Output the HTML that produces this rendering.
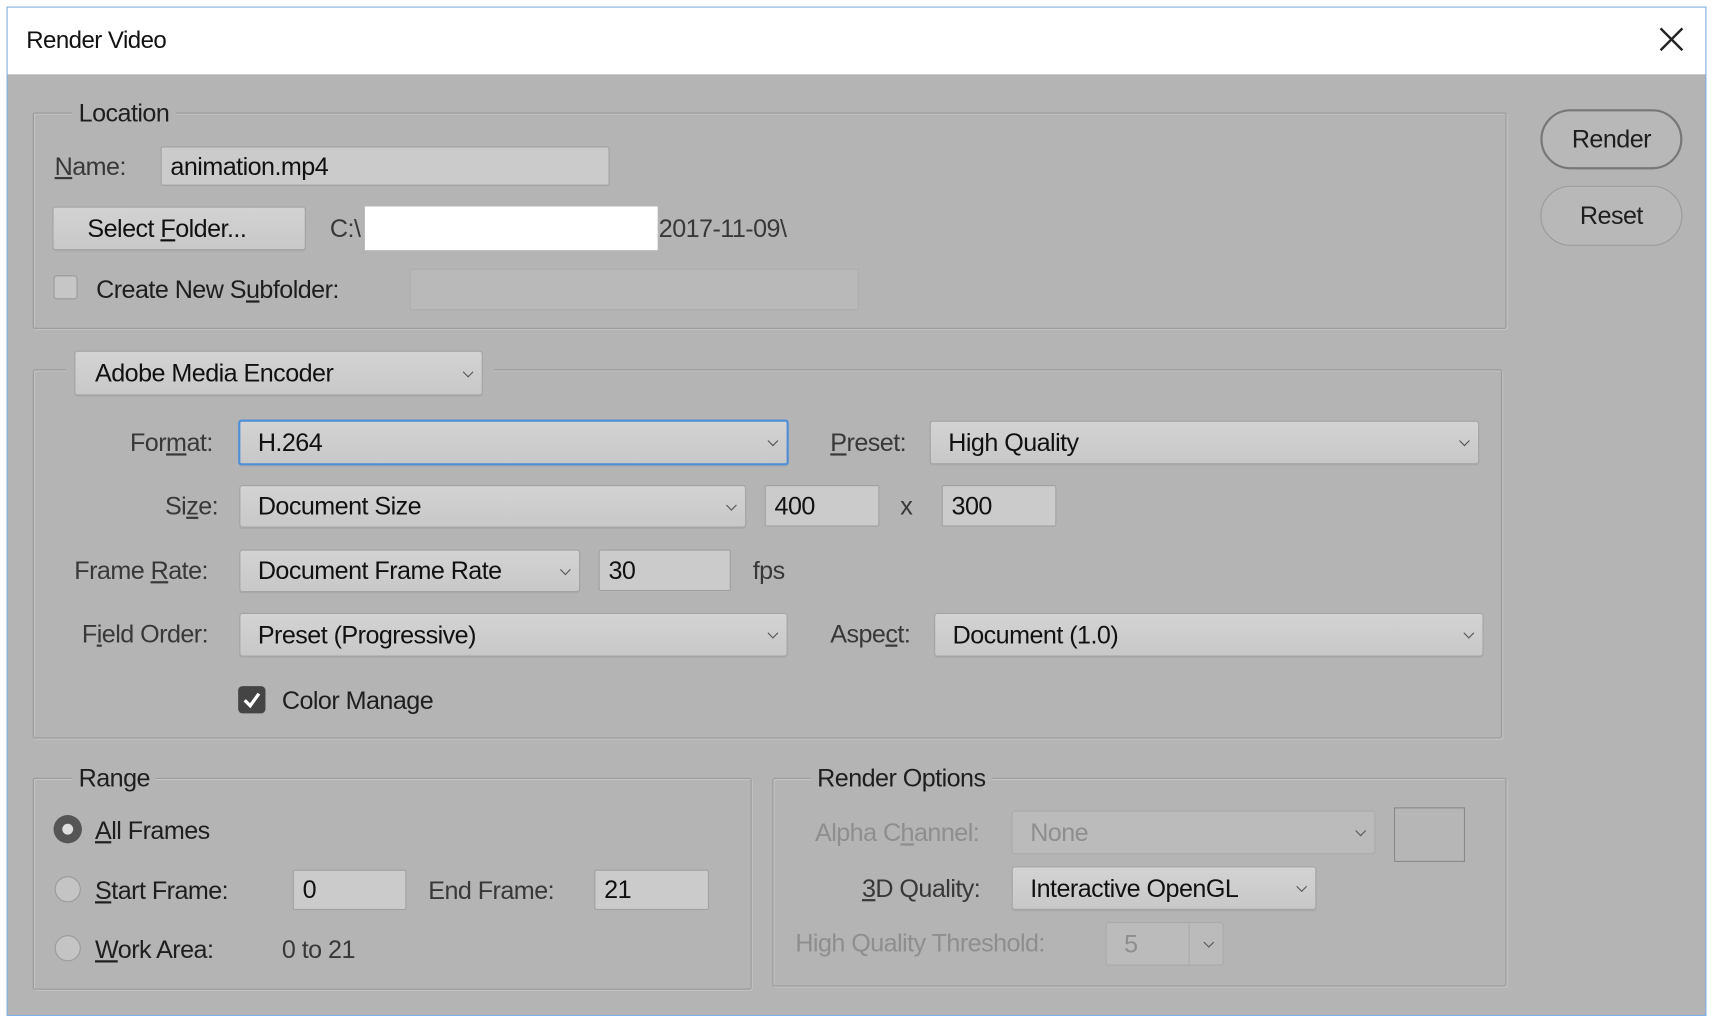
<!DOCTYPE html>
<html><head><meta charset="utf-8"><style>
html,body{margin:0;padding:0;background:#fff;width:1713px;height:1023px;overflow:hidden}
#w{position:absolute;left:0;top:0;width:1568px;height:937px;transform:scale(1.09247);transform-origin:0 0;font-family:"Liberation Sans",sans-serif;font-size:23px;color:#222;letter-spacing:-0.5px}
.a{position:absolute;white-space:nowrap}
.lb{position:absolute;white-space:nowrap;color:#383838;line-height:1}
.dis{color:#8e8e8e}
.grp{position:absolute;border:1px solid #999;box-shadow:inset 1px 1px 0 #c4c4c4,1px 1px 0 #c4c4c4;border-radius:2px}
.leg{position:absolute;background:#b4b4b4;padding:0 6px;line-height:1;color:#1e1e1e}
.in{position:absolute;background:#cbcbcb;border:1px solid #a0a0a0;box-sizing:border-box;border-radius:2px;line-height:1;padding-left:8px;display:flex;align-items:center;color:#111}
.sel{position:absolute;background:linear-gradient(#d3d3d3,#c8c8c8);border:1px solid #a4a4a4;box-sizing:border-box;border-radius:3px;padding-left:16px;display:flex;align-items:center;color:#111;box-shadow:0 1px 0 #a8a8a8}
.sel:after{content:"";position:absolute;right:9px;top:50%;width:6px;height:6px;border-right:1.5px solid #555;border-bottom:1.5px solid #555;transform:translateY(-70%) rotate(45deg)}
.sel.nb:after{display:none}
.u{text-decoration:underline}
</style></head><body>
<div id="w">
<div class="a" style="left:6px;top:6px;width:1554px;height:922px;border:1px solid #7fb0e6;background:#b4b4b4"></div>
<div class="a" style="left:7px;top:7px;width:1554px;height:61px;background:#fff"></div>
<div class="a" style="left:24px;top:24px;font-size:22px;color:#111">Render Video</div>
<svg class="a" style="left:1518px;top:24px" width="24" height="24"><path d="M2 2L22 22M22 2L2 22" stroke="#222" stroke-width="2.2"/></svg>

<div class="grp" style="left:30px;top:103px;width:1347px;height:196px"></div>
<div class="leg" style="left:66px;top:92px">Location</div>
<div class="lb" style="left:50px;top:141px"><span class="u">N</span>ame:</div>
<div class="in" style="left:147px;top:134px;width:411px;height:36px">animation.mp4</div>
<div class="sel nb" style="left:48px;top:189px;width:232px;height:40px;padding-left:31px"><span>Select <span class="u">F</span>older...</span></div>
<div class="lb" style="left:302px;top:198px">C:\</div>
<div class="a" style="left:334px;top:189px;width:268px;height:40px;background:#fff"></div>
<div class="lb" style="left:603px;top:198px">2017-11-09\</div>
<div class="a" style="left:49px;top:252px;width:22px;height:22px;background:#c6c6c6;border:1px solid #999;box-sizing:border-box;border-radius:3px"></div>
<div class="lb" style="left:88px;top:254px;color:#1e1e1e">Create New S<span class="u">u</span>bfolder:</div>
<div class="a" style="left:375px;top:246px;width:411px;height:38px;background:#b9b9b9;border:1px solid #adadad;box-sizing:border-box"></div>

<div class="grp" style="left:30px;top:338px;width:1343px;height:336px"></div>
<div class="a" style="left:60px;top:320px;width:392px;height:44px;background:#b4b4b4"></div>
<div class="sel" style="left:68px;top:321px;width:374px;height:41px;padding-left:18px">Adobe Media Encoder</div>

<div class="lb" style="left:119px;top:394px">For<span class="u">m</span>at:</div>
<div class="sel" style="left:218px;top:384px;width:504px;height:42px;border:2px solid #4f8fd8">H.264</div>
<div class="lb" style="left:760px;top:394px"><span class="u">P</span>reset:</div>
<div class="sel" style="left:851px;top:385px;width:503px;height:40px">High Quality</div>

<div class="lb" style="left:151px;top:452px">Si<span class="u">z</span>e:</div>
<div class="sel" style="left:219px;top:444px;width:464px;height:39px">Document Size</div>
<div class="in" style="left:700px;top:444px;width:105px;height:38px">400</div>
<div class="lb" style="left:824px;top:452px">x</div>
<div class="in" style="left:862px;top:444px;width:105px;height:38px">300</div>

<div class="lb" style="left:68px;top:511px">Frame <span class="u">R</span>ate:</div>
<div class="sel" style="left:219px;top:503px;width:312px;height:39px">Document Frame Rate</div>
<div class="in" style="left:548px;top:503px;width:121px;height:38px">30</div>
<div class="lb" style="left:689px;top:511px">fps</div>

<div class="lb" style="left:75px;top:569px">F<span class="u">i</span>eld Order:</div>
<div class="sel" style="left:219px;top:561px;width:502px;height:40px">Preset (Progressive)</div>
<div class="lb" style="left:760px;top:569px">Aspe<span class="u">c</span>t:</div>
<div class="sel" style="left:855px;top:561px;width:503px;height:40px">Document (1.0)</div>

<div class="a" style="left:218px;top:628px;width:25px;height:25px;background:#444;border-radius:4px"></div>
<svg class="a" style="left:218px;top:628px" width="25" height="25"><path d="M6 13L11 18L19 7" stroke="#fff" stroke-width="3" fill="none"/></svg>
<div class="lb" style="left:258px;top:630px;color:#1e1e1e">Color Mana<span class="u">g</span>e</div>

<div class="grp" style="left:30px;top:712px;width:656px;height:192px"></div>
<div class="leg" style="left:66px;top:701px">Range</div>
<div class="a" style="left:49px;top:746px;width:26px;height:26px;border-radius:50%;background:#555;box-sizing:border-box"></div>
<div class="a" style="left:57px;top:754px;width:10px;height:10px;border-radius:50%;background:#ddd"></div>
<div class="lb" style="left:87px;top:749px;color:#1e1e1e"><span class="u">A</span>ll Frames</div>
<div class="a" style="left:50px;top:802px;width:24px;height:24px;border-radius:50%;background:#c4c4c4;border:1px solid #9a9a9a;box-sizing:border-box"></div>
<div class="lb" style="left:87px;top:804px;color:#1e1e1e"><span class="u">S</span>tart Frame:</div>
<div class="in" style="left:268px;top:796px;width:104px;height:37px">0</div>
<div class="lb" style="left:392px;top:804px">End Frame:</div>
<div class="in" style="left:544px;top:796px;width:105px;height:37px">21</div>
<div class="a" style="left:50px;top:856px;width:24px;height:24px;border-radius:50%;background:#c4c4c4;border:1px solid #9a9a9a;box-sizing:border-box"></div>
<div class="lb" style="left:87px;top:858px;color:#1e1e1e"><span class="u">W</span>ork Area:</div>
<div class="lb" style="left:258px;top:858px">0 to 21</div>

<div class="grp" style="left:707px;top:712px;width:670px;height:189px"></div>
<div class="leg" style="left:742px;top:701px">Render Options</div>
<div class="lb dis" style="left:746px;top:751px">Alpha C<span class="u">h</span>annel:</div>
<div class="sel dis" style="left:926px;top:742px;width:333px;height:40px;background:#bbb;border-color:#ababab;color:#8e8e8e;box-shadow:none">None</div>
<div class="a" style="left:1276px;top:739px;width:65px;height:50px;border:1px solid #888;box-sizing:border-box;background:#b6b6b6"></div>
<div class="lb" style="left:789px;top:802px"><span class="u">3</span>D Quality:</div>
<div class="sel" style="left:926px;top:793px;width:279px;height:40px">Interactive OpenGL</div>
<div class="lb dis" style="left:728px;top:852px">High Quality Threshold:</div>
<div class="sel dis" style="left:1012px;top:844px;width:108px;height:40px;background:#bbb;border-color:#ababab;color:#8e8e8e;box-shadow:none">5</div>
<div class="a" style="left:1088px;top:845px;width:1px;height:38px;background:#aaa"></div>

<div class="a" style="left:1410px;top:100px;width:130px;height:55px;border:2px solid #777;box-sizing:border-box;border-radius:28px;background:#b8b8b8;display:flex;align-items:center;justify-content:center;color:#1e1e1e">Render</div>
<div class="a" style="left:1410px;top:170px;width:130px;height:55px;border:1px solid #999;box-sizing:border-box;border-radius:28px;background:#b8b8b8;display:flex;align-items:center;justify-content:center;color:#1e1e1e">Reset</div>
</div>
</body></html>
